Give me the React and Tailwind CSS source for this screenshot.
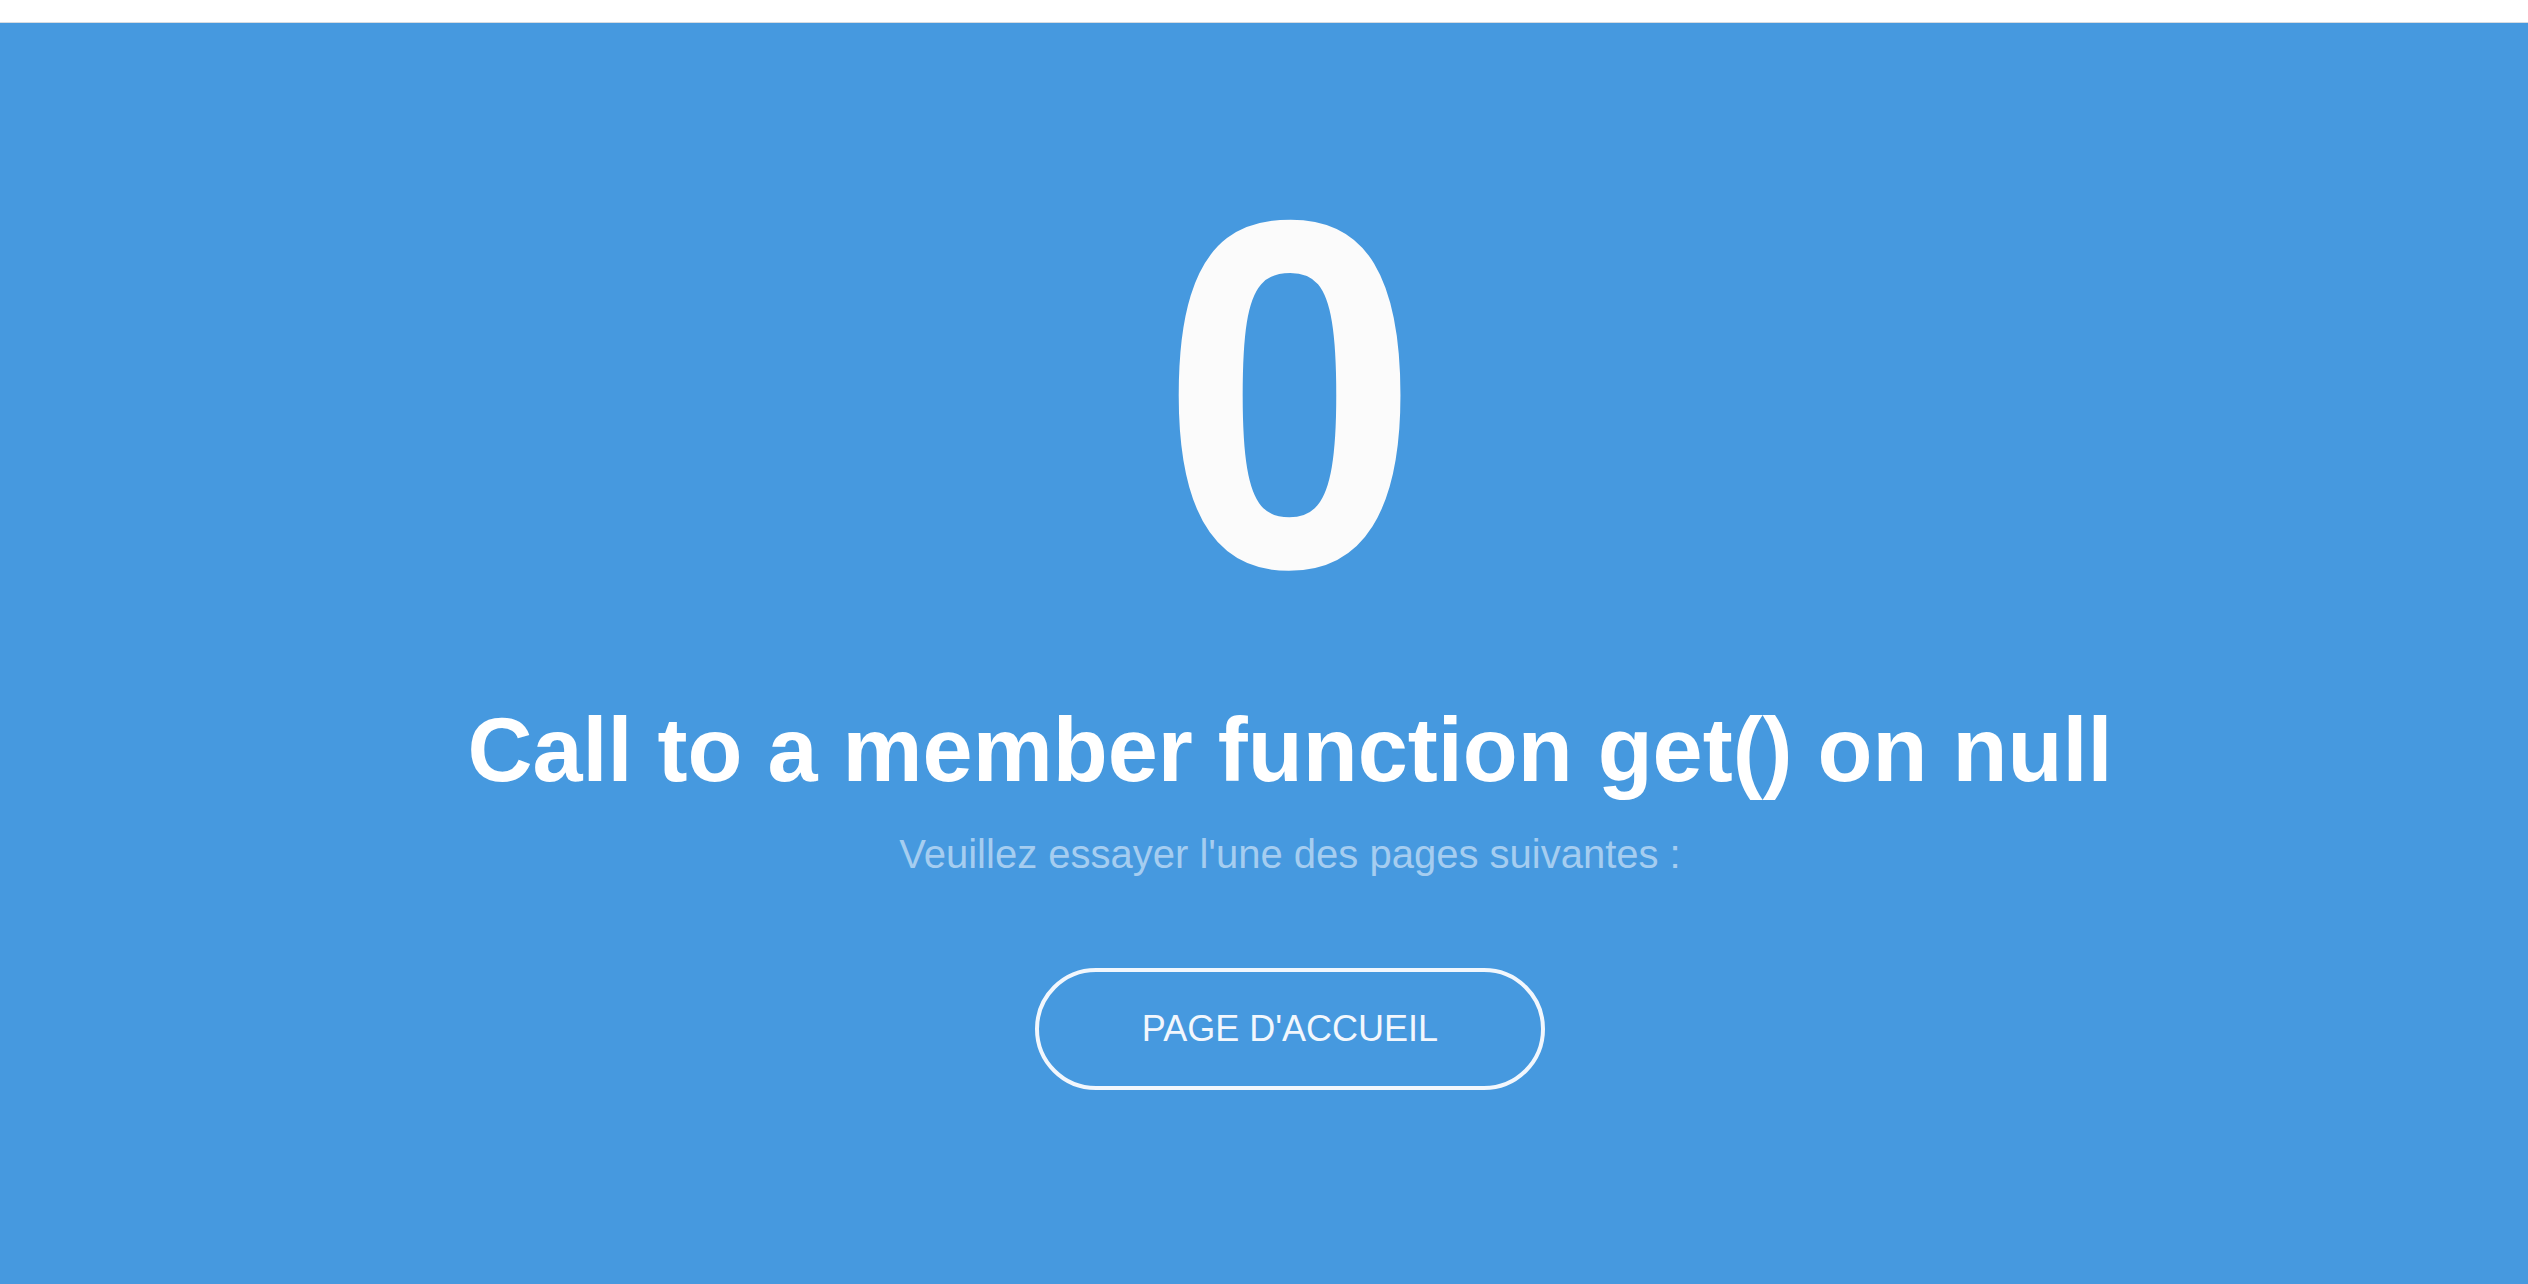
import React from 'react';

export default function App() {
  return (
    <div className="flex min-h-screen flex-col bg-white font-['Liberation_Sans',Arial,sans-serif]">
      <div className="h-[23px] border-b border-[#d5dbe2] bg-white" />
      <div className="flex flex-1 flex-col items-center bg-[#4699df] pl-[52px] pt-[123px]">
        <div className="scale-x-[0.94] text-[496px] font-bold leading-none text-[#fbfbfb]">0</div>
        <h1 className="mt-[63px] text-[90px] font-bold leading-none text-white">
          Call to a member function get() on null
        </h1>
        <p className="mt-[39px] text-[40px] leading-none text-[#a5cdf0]">
          Veuillez essayer l'une des pages suivantes :
        </p>
        <a
          href="#"
          className="mt-[94px] flex h-[122px] w-[510px] items-center justify-center rounded-full border-4 border-[#f2f7fd] text-[36px] text-[#f2f7fd]"
        >
          PAGE D'ACCUEIL
        </a>
      </div>
    </div>
  );
}
